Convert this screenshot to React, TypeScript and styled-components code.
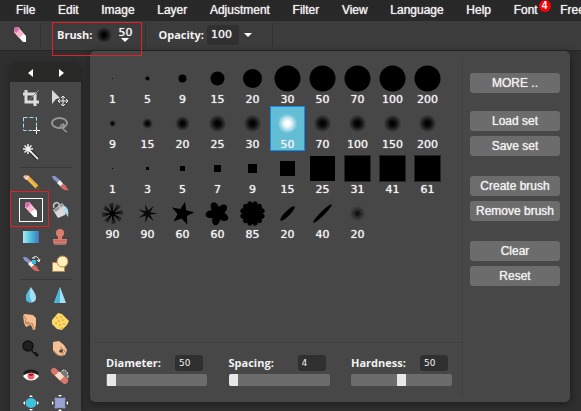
import React, { useState } from "react";
import styled, { createGlobalStyle } from "styled-components";

const GlobalStyle = createGlobalStyle`
  * { box-sizing: border-box; }
  html, body { margin: 0; padding: 0; }
  body {
    background: #2f2f2f;
    color: #f0f0f0;
    font-family: "Liberation Sans", Arial, sans-serif;
    font-size: 12px;
    overflow: hidden;
  }
  button, input { font: inherit; color: inherit; margin: 0; }
`;

const Page = styled.div`
  position: relative;
  display: flex;
  flex-direction: column;
  height: 100vh;
  overflow: hidden;
`;

const MenuBar = styled.nav`
  display: flex;
  flex: none;
  justify-content: space-between;
  height: 21px;
  margin-right: -4px;
  padding-left: 16px;
  background: #282828;
`;

const MenuItem = styled.button`
  position: relative;
  flex: none;
  padding: 0;
  border: 0;
  background: none;
  line-height: 19px;
  white-space: nowrap;
  text-shadow: 0 0 1px #f0f0f0;
`;

const Badge = styled.span`
  position: absolute;
  top: 0;
  right: -13px;
  width: 12px;
  height: 12px;
  border-radius: 50%;
  background: #fb0007;
  color: #fff;
  font-size: 10px;
  font-weight: 700;
  line-height: 12px;
  text-align: center;
  text-shadow: none;
`;

const OptionsBar = styled.div`
  display: flex;
  flex: none;
  align-items: center;
  height: 30px;
  padding: 0 0 2px 10px;
  background: #3c3c3c;
  border-bottom: 1px solid #262626;
`;

const Separator = styled.div<{ $before: number; $after: number }>`
  width: 1px;
  height: 24px;
  margin-left: ${(p) => p.$before}px;
  margin-right: ${(p) => p.$after}px;
  background: #303030;
`;

const Label = styled.label`
  font: 700 11px/16px "Open Sans", "Noto Sans", sans-serif;
  color: #f2f2f2;
  white-space: nowrap;
`;

const BrushPicker = styled.button`
  display: flex;
  align-items: center;
  padding: 0;
  border: 0;
  background: none;
`;

const BrushSize = styled.span`
  display: flex;
  flex-direction: column;
  align-items: center;
  width: 18px;
  font: 11px/10px "DejaVu Sans", sans-serif;
  text-shadow: 0 0 1px #f0f0f0;
`;

const NumberBox = styled.input<{ $small?: boolean }>`
  width: ${(p) => (p.$small ? 28 : 32)}px;
  height: ${(p) => (p.$small ? 16 : 20)}px;
  margin-left: ${(p) => (p.$small ? 0 : 3)}px;
  padding: 0 0 0 4px;
  border: 0;
  border-radius: 3px;
  background: #303030;
  color: #f0f0f0;
  font-family: "DejaVu Sans", sans-serif;
  font-size: ${(p) => (p.$small ? 9 : 11)}px;
  text-shadow: ${(p) => (p.$small ? "none" : "0 0 1px #f0f0f0")};
  outline: 0;
`;

const ArrowButton = styled.button`
  display: flex;
  padding: 5px;
  border: 0;
  background: none;
`;

const Workspace = styled.div`
  flex: 1;
  min-height: 0;
  padding: 13px 0 0 10px;
`;

const ToolPalette = styled.aside`
  width: 71px;
  background: #474747;
  border-radius: 5px 5px 0 0;
  box-shadow: 0 0 6px #202020;
`;

const PaletteHeader = styled.div`
  display: flex;
  justify-content: center;
  gap: 22px;
  height: 18px;
  align-items: center;
  margin-bottom: 2px;
  background: #292927;
  border-radius: 5px 5px 0 0;
`;

const PlainButton = styled.button`
  display: flex;
  padding: 2px;
  border: 0;
  background: none;
`;

const ToolGroup = styled.div`
  display: grid;
  grid-template-columns: 1fr 1fr;
  grid-auto-rows: 27px;
  justify-items: center;
  align-items: center;
  margin: 0 6px;
`;

const ToolDivider = styled.div`
  height: 1px;
  margin: 2px 9px 1px;
  background: #393939;
`;

const ToolButton = styled.button<{ $active?: boolean }>`
  display: grid;
  place-items: center;
  width: 24px;
  height: 24px;
  padding: 0;
  border: 1px solid ${(p) => (p.$active ? "#fff" : "transparent")};
  background: none;
`;

const BrushPopup = styled.section`
  position: absolute;
  top: 51px;
  left: 90px;
  right: 11px;
  display: flex;
  background: #474747;
  border-radius: 5px;
  box-shadow: 0 2px 8px #1c1c1c;
`;

const BrushMain = styled.div`
  flex: 1;
  min-width: 0;
  margin: 10px 0 6px 5px;
  border-right: 1px solid #404040;
`;

const BrushGrid = styled.div`
  display: grid;
  grid-template-columns: repeat(auto-fill, 35px);
  grid-auto-rows: 45px;
  min-height: 281px;
  align-content: start;
`;

const BrushCell = styled.button<{ $selected: boolean }>`
  display: flex;
  flex-direction: column;
  align-items: center;
  padding: 0;
  border: 1px solid ${(p) => (p.$selected ? "#1089f0" : "transparent")};
  background: ${(p) => (p.$selected ? "#62bdd5" : "none")};
  color: #f0f0f0;
  font: 11px/9px "DejaVu Sans", sans-serif;
  text-shadow: 0 0 1px #f0f0f0;
`;

const Sliders = styled.div`
  display: flex;
  justify-content: space-between;
  padding: 12px 10px 10px 11px;
  border-top: 1px solid #3f3f3f;
`;

const SliderField = styled.div`
  display: flex;
  flex-direction: column;
  gap: 3px;
  width: 101px;
`;

const SliderHead = styled.div`
  display: flex;
  align-items: center;
  justify-content: space-between;
  padding-right: 4px;
`;

const Range = styled.input`
  appearance: none;
  width: 100%;
  height: 12px;
  border-radius: 2px;
  background: #6c6c6c;
  overflow: hidden;
  &::-webkit-slider-thumb {
    appearance: none;
    width: 9px;
    height: 12px;
    background: #e8e8e8;
  }
`;

const Actions = styled.div`
  display: flex;
  flex-direction: column;
  width: 107px;
  padding: 22px 10px 0 7px;
`;

const ActionGroup = styled.div`
  display: flex;
  flex-direction: column;
  gap: 5px;
  margin-bottom: 20px;
  &:first-child { margin-bottom: 18px; }
`;

const ActionButton = styled.button`
  height: 20px;
  padding: 0;
  border: 0;
  border-radius: 3px;
  background: #6c6c6c;
  line-height: 20px;
  white-space: nowrap;
  text-shadow: 0 0 1px #f0f0f0;
`;

const Highlight = styled.div<{ $x: number; $y: number; $w: number; $h: number }>`
  position: absolute;
  left: ${(p) => p.$x}px;
  top: ${(p) => p.$y}px;
  width: ${(p) => p.$w}px;
  height: ${(p) => p.$h}px;
  border: 1px solid #e21f26;
  pointer-events: none;
`;

const Glyph = ({ children, size = 20 }: { children: React.ReactNode; size?: number }) => (
  <svg width={size} height={size} viewBox="0 0 20 20" aria-hidden="true">
    {children}
  </svg>
);

const DownArrow = () => (
  <svg width="8" height="4" viewBox="0 0 8 4" aria-hidden="true">
    <path d="M0 0H8L4 4Z" fill="#fff" />
  </svg>
);

const Eraser = () => (
  <>
    <path d="M5 2L8 2L16 11L16 17L13 17L4 7Z" fill="#fff" />
    <path d="M5 2L8 2L14 9L9 13L4 7Z" fill="#f6b6cd" />
    <path d="M5 2L8 2L9 5L6 8L4 6Z" fill="#d767ae" />
  </>
);

const PaintBrush = () => (
  <>
    <path d="M2 3L5 3L10 7L8 10L3 6Z" fill="#8795c9" />
    <path d="M10 7L14 12L11 14L7 10Z" fill="#f2f2f2" />
    <path d="M13 11C17 12 16 15 19 17C14 18 12 16 10 13Z" fill="#cf6a63" />
  </>
);

const dots = [[7, 6], [11, 5], [9, 9], [13, 8], [6, 11], [10, 13], [14, 12], [12, 16]];

const topTools: [string, React.ReactNode][] = [
  ["Crop", <>
    <path d="M5 2V14H18M2 6H14V18" fill="none" stroke="#dcdcdc" strokeWidth="3" />
    <path d="M8 12L18 2" stroke="#888" strokeWidth="1" />
  </>],
  ["Move", <>
    <path d="M2 2L10 10L6 11L2 16Z" fill="#d8d8d8" />
    <path d="M13 8V18M8 13H18M11 10L13 8L15 10M11 16L13 18L15 16M10 11L8 13L10 15M16 11L18 13L16 15" fill="none" stroke="#e8e8e8" />
  </>],
  ["Marquee select", <>
    <rect x="2.5" y="2.5" width="13" height="13" fill="none" stroke="#a6dcec" strokeDasharray="4 2" />
    <path d="M15.500 12V19M12 15.500H19" stroke="#fff" strokeDasharray="3 1" />
  </>],
  ["Lasso select", <>
    <ellipse cx="9.500" cy="8" rx="7.500" ry="5" fill="none" stroke="#969696" strokeWidth="2" />
    <path d="M14 9C11 9 9 12 12 13C15 13 15 11 14 10C11 12 14 16 17 17" fill="none" stroke="#969696" strokeWidth="1.500" />
  </>],
  ["Magic wand", <>
    <path d="M8 8L17 17" stroke="#222" strokeWidth="4" />
    <path d="M8 8L17 17" stroke="#ddd" strokeWidth="2" />
    <path d="M7 2V12M2 7H12M3.500 3.500L10.500 10.500M3.500 10.500L10.500 3.500" stroke="#f2f2f2" strokeWidth="1.500" />
  </>],
];

const paintTools: [string, React.ReactNode][] = [
  ["Pencil", <>
    <path d="M4 5L7 2L17 12L18 17L14 15Z" fill="#e9ac3c" />
    <path d="M6 5L15 14" stroke="#f4cf70" />
    <path d="M2 4L4 2L7 3L4 6Z" fill="#f3b6bd" />
    <path d="M7 3L8 4L5 7L4 6Z" fill="#f8f3e6" />
    <path d="M15 15L18 17L17 13Z" fill="#362e22" />
  </>],
  ["Brush", <PaintBrush />],
  ["Eraser", <Eraser />],
  ["Paint bucket", <>
    <path d="M3 10L12 3L17 9L15 15L8 18Z" fill="#dadada" />
    <path d="M3 10L12 3L14 5L6 12Z" fill="#999" />
    <path d="M4 8C2 3 8 1 9 4L10 9" fill="none" stroke="#c5c5c5" strokeWidth="1.500" />
    <path d="M13 6C18 6 19 11 18 17C15 14 16 10 13 8Z" fill="#addcf0" />
  </>],
  ["Gradient", <>
    <defs><linearGradient id="sky"><stop offset="0" stopColor="#aee8f5" /><stop offset=".5" stopColor="#48bfdd" /><stop offset="1" stopColor="#4975bd" /></linearGradient></defs>
    <rect x="2" y="4" width="16" height="12" fill="url(#sky)" />
  </>],
  ["Clone stamp", <>
    <path d="M8 7H12L12 12H17V16H3V12H8Z" fill="#dc7d70" />
    <circle cx="10" cy="6" r="4" fill="#dc7d70" />
    <path d="M3 14H17" stroke="#b55f55" /><path d="M4 17H16" stroke="#f0aaa0" />
  </>],
  ["Replace color", <>
    <PaintBrush />
    <rect x="11" y="6" width="4" height="4" fill="#35bddf" />
    <path d="M12 4C14 1 18 3 18 7M16 6L18 8L19 5M11 4H14" fill="none" stroke="#eee" />
  </>],
  ["Shapes", <>
    <rect x="2.500" y="8.500" width="12" height="9" fill="#fff0b8" stroke="#b58353" />
    <circle cx="12.500" cy="7.500" r="5.500" fill="#fff0b8" stroke="#b58353" />
  </>],
];

const retouchTools: [string, React.ReactNode][] = [
  ["Blur", <>
    <path d="M10 2C13 7 15 9 15 13C15 19 5 19 5 13C5 9 7 7 10 2Z" fill="#a8def3" />
    <path d="M10 2C8 8 8 12 11 17C7 18 5 16 5 13C5 9 7 7 10 2Z" fill="#49bddd" />
  </>],
  ["Sharpen", <><path d="M10 2L16 18H4Z" fill="#a8def3" /><path d="M10 2V18H4Z" fill="#43b9d8" /></>],
  ["Smudge", <>
    <path d="M2 3L4 2L12 3L15 6V12L14 18L12 18L10 13L5 15L3 11Z" fill="#f5bd91" />
    <path d="M2 3L5 7L4 11L8 10M5 12L9 11M6 14L11 11L13 18" fill="none" stroke="#b87f56" />
  </>],
  ["Sponge", <>
    <path d="M2 8L8 1L12 2L19 9L17 13L12 18L7 17L2 12Z" fill="#f8db67" />
    {dots.map(([x, y]) => <circle key={`${x}-${y}`} cx={x} cy={y} r="1" fill="#e8a83d" />)}
  </>],
  ["Dodge", <>
    <path d="M11 11L17 17" stroke="#161616" strokeWidth="3" />
    <circle cx="7" cy="7" r="5" fill="#202020" stroke="#111" strokeWidth="1.500" />
    <path d="M12 11L14 13" stroke="#777" />
  </>],
  ["Burn", <>
    <path d="M3 3L9 2L14 6L17 11L15 16L11 17L7 16L3 12Z" fill="#f5c096" />
    <path d="M9 13C9 10 13 9 13 12L12 14Z" fill="#474747" />
    <path d="M3 11L8 16L12 17M10 8L15 12L12 16" fill="none" stroke="#b58259" strokeWidth="1" />
  </>],
  ["Red eye", <>
    <path d="M3 8C7 4 13 4 17 8" fill="none" stroke="#1a1a1a" strokeWidth="3" />
    <path d="M2 10C6 6 14 6 18 10C14 16 6 16 2 10Z" fill="#fff" />
    <circle cx="10" cy="10" r="3.500" fill="#ee6072" /><path d="M7 8H13L11 10H9Z" fill="#a51d35" />
  </>],
  ["Spot heal", <>
    <ellipse cx="14" cy="10" rx="4" ry="6" fill="#777" stroke="#eee" strokeDasharray="2 1" />
    <path d="M4 5L15 15" stroke="#d97769" strokeWidth="6" strokeLinecap="round" />
    <path d="M7 7.500L12 12.500" stroke="#f8dbc5" strokeWidth="6" />
  </>],
  ["Bloat", <>
    <ellipse cx="10" cy="10" rx="5.500" ry="5" fill="#3fc0df" />
    <path d="M8 4L10 2L12 4ZM8 16L10 18L12 16ZM4 8L2 10L4 12ZM16 8L18 10L16 12Z" fill="#fff" />
  </>],
  ["Pinch", <>
    <path d="M5 5Q10 6 15 5Q14 10 15 15Q10 14 5 15Q6 10 5 5Z" fill="#98a1d0" stroke="#98a1d0" />
    <path d="M8 2H12L10 4ZM8 18H12L10 16ZM2 8V12L4 10ZM18 8V12L16 10Z" fill="#fff" />
  </>],
];

type Tip = { kind: string; size: number; label: number };
const makeTips = (kind: string, sizes: number[], labels: number[]): Tip[] =>
  labels.map((label, i) => ({ kind, size: sizes[i], label }));

const tips: Tip[] = [
  ...makeTips("hard", [1, 4, 8, 14, 19, 26, 26, 26, 26, 26], [1, 5, 9, 15, 20, 30, 50, 70, 100, 200]),
  ...makeTips("soft", [7, 11, 15, 18, 18, 20, 18, 18, 18, 18], [9, 15, 20, 25, 30, 50, 70, 100, 150, 200]),
  ...makeTips("square", [1, 3, 5, 7, 9, 15, 25, 26, 26, 26], [1, 3, 5, 7, 9, 15, 25, 31, 41, 61]),
  { kind: "burst", size: 22, label: 90 },
  { kind: "spark", size: 20, label: 90 },
  { kind: "star", size: 24, label: 60 },
  { kind: "flower", size: 24, label: 60 },
  { kind: "rosette", size: 25, label: 85 },
  { kind: "stroke", size: 20, label: 20 },
  { kind: "longStroke", size: 26, label: 40 },
  { kind: "glow", size: 16, label: 20 },
];

const starPoints = (count: number, outer: number, inner: number, turn: number) =>
  Array.from({ length: count * 2 }, (_, i) => {
    const r = i % 2 ? inner : outer;
    const a = ((turn + (i * 180) / count) * Math.PI) / 180;
    return `${(Math.cos(a) * r).toFixed(2)},${(Math.sin(a) * r).toFixed(2)}`;
  }).join(" ");

const turns = (n: number) => Array.from({ length: n }, (_, i) => (i * 360) / n);

function TipShape({ tip, selected }: { tip: Tip; selected: boolean }) {
  const r = tip.size / 2;
  switch (tip.kind) {
    case "hard": return <circle r={r} />;
    case "soft": return <circle r={r} fill={selected ? "url(#softLight)" : "url(#softDark)"} />;
    case "square": return <rect x={-r} y={-r} width={tip.size} height={tip.size} fill="#000" stroke={tip.size > 25 ? "#262626" : "none"} />;
    case "burst": return (
      <g>{turns(8).map((a) => <path key={a} d="M0 0L10 -3L11 2Z" fill="url(#fade)" transform={`rotate(${a - 4})`} />)}<circle r="3" /></g>
    );
    case "spark": return <polygon points={starPoints(7, 10, 3, 0)} opacity=".85" />;
    case "star": return <polygon points={starPoints(5, 12, 5, 282)} />;
    case "flower": return (
      <g>{turns(5).map((a) => <ellipse key={a} cx="6" rx="6" ry="4" transform={`rotate(${a + 30})`} />)}<circle r="6" /></g>
    );
    case "rosette": return (
      <g>{turns(12).map((a) => <circle key={a} cx="10" r="2.500" transform={`rotate(${a + 15})`} />)}<circle r="10.500" /></g>
    );
    case "stroke": return <ellipse rx="10" ry="2.500" transform="rotate(-45)" />;
    case "longStroke": return <ellipse rx="13" ry="2" transform="rotate(-45)" />;
    default: return <g><circle r="8" fill="url(#softDark)" opacity=".5" /><polygon points={starPoints(6, 6, 1, 10)} opacity=".6" /></g>;
  }
}

function Tools({ items }: { items: [string, React.ReactNode][] }) {
  return (
    <ToolGroup>
      {items.map(([name, art]) => (
        <ToolButton key={name} aria-label={name} $active={name === "Eraser"}><Glyph>{art}</Glyph></ToolButton>
      ))}
    </ToolGroup>
  );
}

function Slider({ name, id, initial, max }: { name: string; id: string; initial: number; max: number }) {
  const [value, setValue] = useState(initial);
  return (
    <SliderField>
      <SliderHead>
        <Label htmlFor={id}>{name}:</Label>
        <NumberBox $small aria-label={`${name} value`} value={value} onChange={(e) => setValue(Number(e.target.value) || 0)} />
      </SliderHead>
      <Range type="range" id={id} min={0} max={max} value={value} onChange={(e) => setValue(Number(e.target.value))} />
    </SliderField>
  );
}

const menus = ["File", "Edit", "Image", "Layer", "Adjustment", "Filter", "View", "Language", "Help", "Font", "Free"];
const actions = [["MORE .."], ["Load set", "Save set"], ["Create brush", "Remove brush"], ["Clear", "Reset"]];

export default function App() {
  const [selected, setSelected] = useState(15);
  return (
    <Page>
      <GlobalStyle />
      <MenuBar>
        {menus.map((m) => <MenuItem key={m}>{m}{m === "Font" && <Badge>4</Badge>}</MenuItem>)}
      </MenuBar>
      <OptionsBar>
        <Glyph size={20}><Eraser /></Glyph>
        <Separator $before={10} $after={16} />
        <Label as="span">Brush:</Label>
        <BrushPicker aria-label="Brush size 50">
          <svg width="24" height="24" viewBox="-12 -12 24 24" aria-hidden="true">
            <defs>
              <radialGradient id="softDark"><stop offset="0" stopColor="#000" /><stop offset=".3" stopColor="#000" stopOpacity=".9" /><stop offset="1" stopColor="#000" stopOpacity="0" /></radialGradient>
              <radialGradient id="softLight"><stop offset="0" stopColor="#fff" /><stop offset=".3" stopColor="#fff" stopOpacity=".95" /><stop offset="1" stopColor="#fff" stopOpacity="0" /></radialGradient>
              <radialGradient id="fade" gradientUnits="userSpaceOnUse" cx="0" cy="0" r="12"><stop offset=".3" stopColor="#000" /><stop offset="1" stopColor="#000" stopOpacity=".2" /></radialGradient>
            </defs>
            <circle r="8" fill="url(#softDark)" />
          </svg>
          <BrushSize>50<DownArrow /></BrushSize>
        </BrushPicker>
        <Separator $before={11} $after={12} />
        <Label htmlFor="opacity">Opacity:</Label>
        <NumberBox id="opacity" defaultValue="100" />
        <ArrowButton aria-label="Opacity options"><DownArrow /></ArrowButton>
        <Separator $before={15} $after={0} />
      </OptionsBar>
      <Workspace>
        <ToolPalette>
          <PaletteHeader>
            <PlainButton aria-label="Previous"><svg width="5" height="8"><path d="M5 0V8L0 4Z" fill="#fff" /></svg></PlainButton>
            <PlainButton aria-label="Next"><svg width="5" height="8"><path d="M0 0V8L5 4Z" fill="#fff" /></svg></PlainButton>
          </PaletteHeader>
          <Tools items={topTools} />
          <ToolDivider />
          <Tools items={paintTools} />
          <ToolDivider />
          <Tools items={retouchTools} />
        </ToolPalette>
      </Workspace>
      <BrushPopup>
        <BrushMain>
          <BrushGrid>
            {tips.map((tip, i) => (
              <BrushCell key={i} $selected={i === selected} onClick={() => setSelected(i)}>
                <svg width="33" height="33" viewBox="-16.5 -16.5 33 33" aria-hidden="true">
                  <TipShape tip={tip} selected={i === selected} />
                </svg>
                {tip.label}
              </BrushCell>
            ))}
          </BrushGrid>
          <Sliders>
            <Slider name="Diameter" id="diameter" initial={50} max={5000} />
            <Slider name="Spacing" id="spacing" initial={4} max={1000} />
            <Slider name="Hardness" id="hardness" initial={50} max={100} />
          </Sliders>
        </BrushMain>
        <Actions>
          {actions.map((group) => (
            <ActionGroup key={group[0]}>
              {group.map((a) => <ActionButton key={a}>{a}</ActionButton>)}
            </ActionGroup>
          ))}
        </Actions>
      </BrushPopup>
      <Highlight $x={52} $y={22} $w={90} $h={34} />
      <Highlight $x={10} $y={191} $w={39} $h={36} />
    </Page>
  );
}
